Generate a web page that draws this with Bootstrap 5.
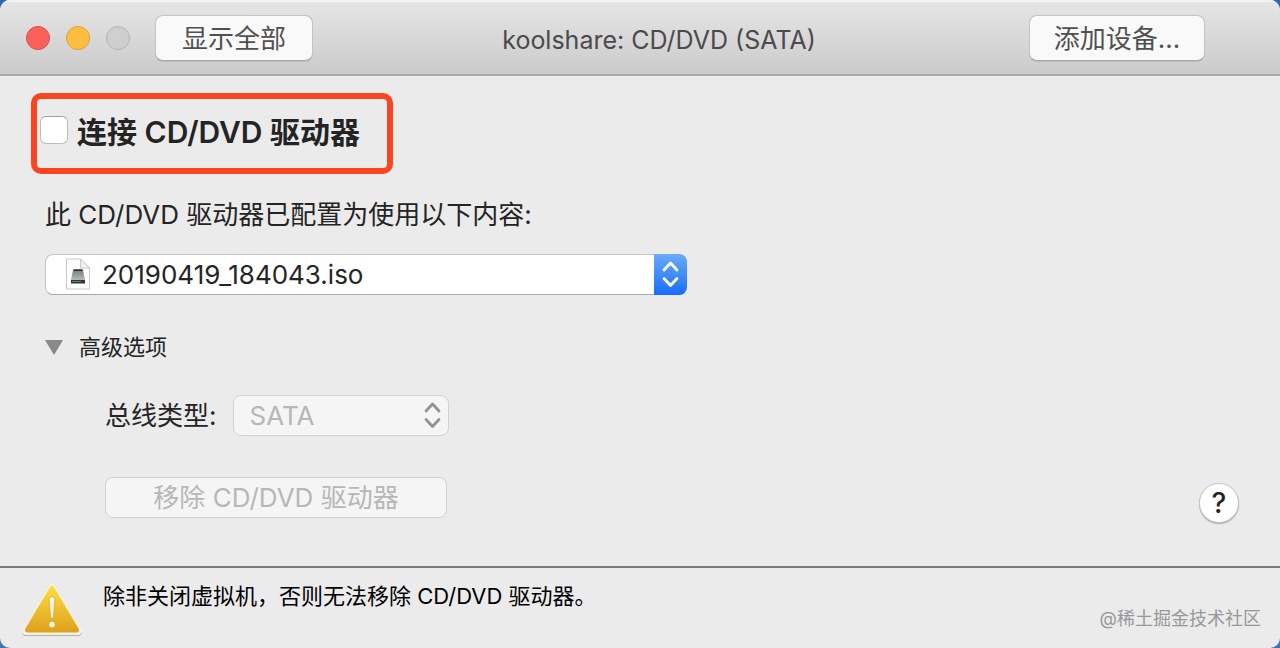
<!DOCTYPE html>
<html lang="zh-CN">
<head>
<meta charset="utf-8">
<meta name="viewport" content="width=device-width, initial-scale=1">
<title>koolshare: CD/DVD (SATA)</title>
<link href="https://cdn.jsdelivr.net/npm/bootstrap@5.3.0/dist/css/bootstrap.min.css" rel="stylesheet">
<style>
  body { font-family: Inter, "Noto Sans CJK SC", sans-serif; font-size: 26px; line-height: 40px; color: #242424; background: linear-gradient(#2f66b5, #3f72b8); }
  .app-window { background: #ebebeb; border-radius: 10px; overflow: hidden; }

  /* title bar */
  .title-bar { height: 76px; padding: 2px 75px 0 26px; background: linear-gradient(#e6e6e6, #cbcbcb); border-bottom: 2px solid #a8a8a8; box-shadow: inset 0 2px #f4f4f4; }
  .traffic { gap: 16px; margin-right: 25px; }
  .dot { width: 24px; height: 24px; border-radius: 50%; border: 1px solid; padding: 0; }
  .dot-close { background: #fc605b; border-color: #e14b46; }
  .dot-min { background: #fdbe40; border-color: #dfa134; }
  .dot-zoom { background: #cfcfcf; border-color: #b3b3b3; }
  .bar-btn { --bs-btn-font-size: 26px; --bs-btn-line-height: 40px; --bs-btn-padding-x: 0; --bs-btn-color: #505050; --bs-btn-bg: #f9f9f9; --bs-btn-border-color: #c3c3c3; --bs-btn-border-radius: 8px; --bs-btn-hover-bg: #fff; --bs-btn-hover-color: #505050; padding-top: 3px; padding-bottom: 1px; border-bottom-color: #a6a6a6; box-shadow: 0 1px #bdbdbd; }
  .show-all { width: 158px; }
  .add-device { width: 176px; }
  .bar-title { color: #4b4b4b; font-size: 25px; line-height: 40px; padding-top: 4px; }

  /* settings */
  .settings { padding: 17px 41px 43px 31px; }
  .highlight { width: 362px; height: 81px; border: 6px solid #fb4420; border-radius: 10px; padding: 0 3px 4px; }
  .connect-box.form-check-input { width: 28px; height: 28px; margin: 0 9px 4px 0; border: 1px solid #bcbcbc; border-top-color: #a0a0a0; border-radius: 6px; background-color: #fff; }
  .connect-label { font-size: 30px; font-weight: 600; }
  .fields { padding-left: 14px; }
  .image-label { margin: 21px 0 19px; }
  .picker { position: relative; }
  .picker .form-select { height: 41px; padding: 0 40px 0 16px; font-size: 26px; line-height: 38px; background-image: none; background-color: #fff; color: #242424; border: 1px solid #c4c4c4; border-bottom-color: #a8a8a8; border-radius: 8px; }
  .picker-image { width: 642px; max-width: 100%; }
  .picker-image .form-select { padding-left: 56px; }
  .picker svg { position: absolute; pointer-events: none; }
  .file-icon { left: 20px; top: 4px; }
  .stepper { right: 0; top: 0; }
  .picker-bus { width: 216px; }
  .picker-bus .form-select:disabled { background-color: #f5f5f5; color: #b7b7b7; border-color: #d2d2d2; opacity: 1; }
  .disclosure { margin: 32px 0 28px; padding: 0; border: 0; background: none; font-size: 22px; color: #242424; gap: 16px; }
  .advanced { padding-left: 60px; }
  .remove-btn { width: 342px; margin-top: 41px; --bs-btn-font-size: 26px; --bs-btn-line-height: 39px; --bs-btn-padding-y: 0; --bs-btn-padding-x: 0; --bs-btn-border-radius: 8px; --bs-btn-disabled-color: #b7b7b7; --bs-btn-disabled-bg: #f5f5f5; --bs-btn-disabled-border-color: #d0d0d0; --bs-btn-disabled-opacity: 1; }
  .help-btn { width: 40px; height: 40px; padding: 0; border: 1px solid #c6c6c6; border-radius: 50%; background: #fff; color: #242424; font-size: 28px; font-weight: 500; line-height: 38px; box-shadow: 0 1px 1px #aaa; }

  /* status bar */
  .status-bar { border-top: 2px solid #7b7b7b; padding: 8px 19px 8px 21px; min-height: 82px; gap: 20px; }
  .warning-icon { margin-top: 6px; }
  .status-text { font-size: 22px; color: #000; }
  .credit { font-size: 18px; line-height: 24px; color: #989898; padding-bottom: 9px; }
</style>
</head>
<body>
<div class="app-window d-flex flex-column min-vh-100">
  <header class="title-bar d-flex align-items-center">
    <div class="traffic d-flex">
      <button type="button" class="dot dot-close" aria-label="关闭"></button>
      <button type="button" class="dot dot-min" aria-label="最小化"></button>
      <button type="button" class="dot dot-zoom" aria-label="缩放" disabled></button>
    </div>
    <button type="button" class="btn bar-btn show-all">显示全部</button>
    <h1 class="bar-title flex-fill text-center fw-normal mb-0 me-4">koolshare: CD/DVD (SATA)</h1>
    <button type="button" class="btn bar-btn add-device">添加设备...</button>
  </header>

  <main class="settings flex-grow-1 d-flex justify-content-between align-items-end">
    <form class="align-self-start">
      <div class="highlight d-flex align-items-center">
        <input class="form-check-input connect-box" type="checkbox" id="connect">
        <label class="connect-label" for="connect">连接 CD/DVD 驱动器</label>
      </div>
      <div class="fields">
        <label class="image-label d-block" for="image">此 CD/DVD 驱动器已配置为使用以下内容:</label>
        <div class="picker picker-image">
          <select class="form-select" id="image"><option>20190419_184043.iso</option></select>
          <svg class="file-icon" width="26" height="32" viewBox="0 0 26 32" aria-hidden="true">
            <defs><linearGradient id="drive" x1="0" y1="0" x2="0" y2="1"><stop stop-color="#76807f"/><stop offset="1" stop-color="#b4baba"/></linearGradient></defs>
            <path d="M1.500 1h14l9 9v21h-23z" fill="#fdfdfd" stroke="#c9c9c9"/>
            <path d="M15.500 1v9h9z" fill="#f2f2f2" stroke="#c9c9c9"/>
            <path d="M8 12h10l2 10H6z" fill="url(#drive)"/><path d="M8.500 12h9" stroke="#222" stroke-width="1.500"/>
            <path d="M6 22h14v3.500H6z" fill="#303333"/><path d="M7 23.500h9" stroke="#707777"/>
          </svg>
          <svg class="stepper" width="33" height="41" viewBox="0 0 33 41" aria-hidden="true">
            <defs><linearGradient id="blue" x1="0" y1="0" x2="0" y2="1"><stop stop-color="#6baafa"/><stop offset="1" stop-color="#176ef9"/></linearGradient></defs>
            <path d="M0 0h25a8 8 0 0 1 8 8v25a8 8 0 0 1-8 8H0z" fill="url(#blue)"/>
            <path d="M10 16l6.500-7 6.500 7M10 24.500l6.500 7 6.500-7" fill="none" stroke="#fff" stroke-width="2.800" stroke-linecap="round" stroke-linejoin="round"/>
          </svg>
        </div>
        <button type="button" class="disclosure d-flex align-items-center" data-bs-toggle="collapse" data-bs-target="#advanced" aria-expanded="true" aria-controls="advanced">
          <svg width="18" height="16" viewBox="0 0 18 16" aria-hidden="true"><path d="M0 1h18L9 16z" fill="#898989"/></svg>
          高级选项
        </button>
        <div class="collapse show advanced" id="advanced">
          <div class="d-flex align-items-center gap-3">
            <label for="bus">总线类型:</label>
            <div class="picker picker-bus">
              <select class="form-select" id="bus" disabled><option>SATA</option></select>
              <svg class="stepper" width="33" height="41" viewBox="0 0 33 41" aria-hidden="true">
                <path d="M10 16l6.500-7 6.500 7M10 24.500l6.500 7 6.500-7" fill="none" stroke="#939393" stroke-width="2.800" stroke-linecap="round" stroke-linejoin="round"/>
              </svg>
            </div>
          </div>
          <button type="button" class="btn btn-light remove-btn" disabled>移除 CD/DVD 驱动器</button>
        </div>
      </div>
    </form>
    <button type="button" class="help-btn flex-shrink-0" aria-label="帮助">?</button>
  </main>

  <footer class="status-bar d-flex align-items-start">
    <svg class="warning-icon flex-shrink-0" width="62" height="56" viewBox="0 0 62 56" aria-hidden="true">
      <defs><linearGradient id="amber" x1="0" y1="0" x2="0" y2="1"><stop stop-color="#fbdb3f"/><stop offset="1" stop-color="#e0a320"/></linearGradient></defs>
      <path d="M31 5L57 50H5z" fill="#b0b0b0" stroke="#b0b0b0" stroke-width="8" stroke-linejoin="round"/>
      <path d="M31 5L57 49H5z" fill="#f5f1e6" stroke="#f5f1e6" stroke-width="8" stroke-linejoin="round"/>
      <path d="M31 6.500L55.500 48h-49z" fill="url(#amber)" stroke="url(#amber)" stroke-width="5" stroke-linejoin="round"/>
      <path d="M28 16q3-3 6 0l-1.600 19.500q-1.400 1.500-2.800 0z" fill="#fff6da" stroke="#c89a2a" stroke-width=".6"/>
      <circle cx="31" cy="42.500" r="3.200" fill="#fff6da" stroke="#c89a2a" stroke-width=".6"/>
    </svg>
    <div class="status-text flex-grow-1">除非关闭虚拟机，否则无法移除 CD/DVD 驱动器。</div>
    <div class="credit align-self-end text-nowrap">@稀土掘金技术社区</div>
  </footer>
</div>
<script src="https://cdn.jsdelivr.net/npm/bootstrap@5.3.0/dist/js/bootstrap.bundle.min.js"></script>
</body>
</html>
